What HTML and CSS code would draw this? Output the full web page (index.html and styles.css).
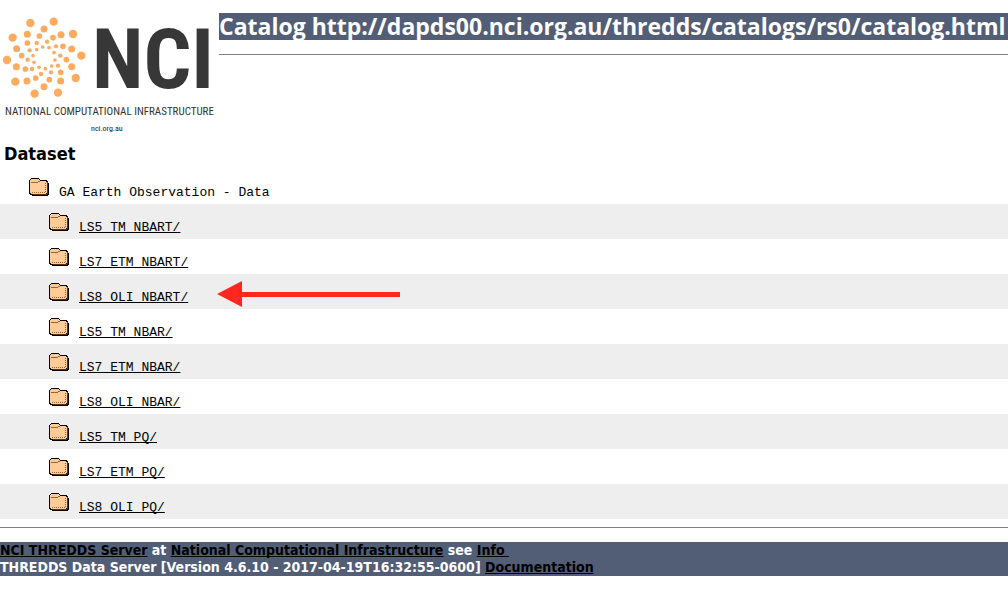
FILE: index.html
```html
<!DOCTYPE html>
<html lang="en">
<head>
<meta charset="utf-8">
<title>Catalog http://dapds00.nci.org.au/thredds/catalogs/rs0/catalog.html</title>
<link rel="stylesheet" href="styles.css">
</head>
<body>
<svg class="defs" aria-hidden="true">
  <symbol id="folder" viewBox="0 0 20 18">
    <path fill="#000" d="M2 0h8v1h1v1h7v1h1v2h1v12h-1v1H3v-1H1v-1H0V2h1V1h1z"/>
    <path fill="#663300" d="M18 4h1v12h-1v1H4v-1h14z"/>
    <path fill="#ffcc99" d="M2 1h8v1h1v1h6v1h1v11h-1v1H2v-1H1V2h1z"/>
    <path fill="none" stroke="#996633" d="M2 4.500h7M9 3.500h2"/>
    <path fill="none" stroke="#996633" stroke-dasharray="1 1" d="M3 14.500h14M16.500 5v10"/>
  </symbol>
</svg>
<header class="masthead">
  <svg class="logo" viewBox="0 0 219 138" role="img" aria-label="NCI National Computational Infrastructure">
    <g class="logo-dots" transform="scale(.33333)">
      <g><circle cx="91" cy="69" r="12.500"/><circle cx="161" cy="65" r="12.500"/><circle cx="219" cy="102" r="12.500"/><circle cx="244" cy="167" r="12.500"/><circle cx="227" cy="234" r="12.500"/><circle cx="174" cy="278" r="12.500"/><circle cx="104" cy="281" r="12.500"/><circle cx="46" cy="245" r="12.500"/><circle cx="21" cy="180" r="12.500"/><circle cx="38" cy="113" r="12.500"/></g>
      <g><circle cx="132" cy="87" r="10.500"/><circle cx="183" cy="104" r="10.500"/><circle cx="215" cy="147" r="10.500"/><circle cx="215" cy="200" r="10.500"/><circle cx="182" cy="243" r="10.500"/><circle cx="132" cy="260" r="10.500"/><circle cx="81" cy="243" r="10.500"/><circle cx="49" cy="200" r="10.500"/><circle cx="50" cy="146" r="10.500"/><circle cx="82" cy="103" r="10.500"/></g>
      <g><circle cx="159" cy="113" r="8.500"/><circle cx="189" cy="139" r="8.500"/><circle cx="199" cy="179" r="8.500"/><circle cx="182" cy="217" r="8.500"/><circle cx="148" cy="239" r="8.500"/><circle cx="107" cy="234" r="8.500"/><circle cx="76" cy="207" r="8.500"/><circle cx="65" cy="167" r="8.500"/><circle cx="82" cy="129" r="8.500"/><circle cx="118" cy="108" r="8.500"/></g>
      <g><circle cx="141" cy="125" r="6.500"/><circle cx="168" cy="139" r="6.500"/><circle cx="181" cy="167" r="6.500"/><circle cx="174" cy="197" r="6.500"/><circle cx="153" cy="217" r="6.500"/><circle cx="123" cy="222" r="6.500"/><circle cx="96" cy="207" r="6.500"/><circle cx="83" cy="179" r="6.500"/><circle cx="89" cy="151" r="6.500"/><circle cx="110" cy="129" r="6.500"/></g>
      <g><circle cx="128" cy="141" r="5.500"/><circle cx="147" cy="143" r="5.500"/><circle cx="162" cy="158" r="5.500"/><circle cx="165" cy="180" r="5.500"/><circle cx="155" cy="198" r="5.500"/><circle cx="136" cy="206" r="5.500"/><circle cx="117" cy="202" r="5.500"/><circle cx="102" cy="187" r="5.500"/><circle cx="99" cy="167" r="5.500"/><circle cx="110" cy="149" r="5.500"/></g>
    </g>
    <text class="logo-name" x="92" y="88">NCI</text>
    <text class="logo-tagline" x="5" y="115">NATIONAL COMPUTATIONAL INFRASTRUCTURE</text>
    <text class="logo-site" x="91" y="131">nci.org.au</text>
  </svg>
  <div class="heading">
    <h1 class="title">Catalog http://dapds00.nci.org.au/thredds/catalogs/rs0/catalog.html</h1>
    <hr class="rule">
  </div>
</header>
<main>
  <table class="catalog">
    <thead><tr><th scope="col">Dataset</th></tr></thead>
    <tbody>
      <tr><td class="root"><div class="entry"><svg class="folder"><use href="#folder"/></svg><span>GA Earth Observation - Data</span></div></td></tr>
      <tr><td><div class="entry"><svg class="folder"><use href="#folder"/></svg><a href="#">LS5_TM_NBART/</a></div></td></tr>
      <tr><td><div class="entry"><svg class="folder"><use href="#folder"/></svg><a href="#">LS7_ETM_NBART/</a></div></td></tr>
      <tr><td><div class="entry"><svg class="folder"><use href="#folder"/></svg><a href="#">LS8_OLI_NBART/</a><svg class="arrow" viewBox="0 0 183 26" aria-hidden="true"><path d="M0 13 25 0v11h158v5H25v10z"/></svg></div></td></tr>
      <tr><td><div class="entry"><svg class="folder"><use href="#folder"/></svg><a href="#">LS5_TM_NBAR/</a></div></td></tr>
      <tr><td><div class="entry"><svg class="folder"><use href="#folder"/></svg><a href="#">LS7_ETM_NBAR/</a></div></td></tr>
      <tr><td><div class="entry"><svg class="folder"><use href="#folder"/></svg><a href="#">LS8_OLI_NBAR/</a></div></td></tr>
      <tr><td><div class="entry"><svg class="folder"><use href="#folder"/></svg><a href="#">LS5_TM_PQ/</a></div></td></tr>
      <tr><td><div class="entry"><svg class="folder"><use href="#folder"/></svg><a href="#">LS7_ETM_PQ/</a></div></td></tr>
      <tr><td><div class="entry"><svg class="folder"><use href="#folder"/></svg><a href="#">LS8_OLI_PQ/</a></div></td></tr>
    </tbody>
  </table>
</main>
<hr class="rule rule-bottom">
<footer class="server">
  <p><a href="#">NCI THREDDS Server</a> at <a href="#">National Computational Infrastructure</a> see <a href="#">Info&nbsp;</a></p>
  <p>THREDDS Data Server [Version 4.6.10 - 2017-04-19T16:32:55-0600] <a href="#">Documentation</a></p>
</footer>
</body>
</html>
```
FILE: styles.css
```css
body {
  margin: 0;
  background: #fff;
  color: #000;
  font-family: Tahoma, "DejaVu Sans Condensed", "DejaVu Sans", sans-serif;
}
a { color: #000; text-decoration-skip-ink: none; }
.defs { display: block; width: 0; height: 0; }
.masthead { display: flex; align-items: flex-start; }
.logo { flex: none; width: 219px; height: 138px; }
.logo-dots { fill: #fdab5f; }
.logo-name {
  fill: #373737;
  font: bold 84px "Roboto Condensed", Roboto, sans-serif;
}
.logo-tagline { fill: #333; font: 11px "Roboto Condensed", Roboto, sans-serif; }
.logo-site { fill: #222; font: 8px "Roboto Condensed", Roboto, sans-serif; }
.heading { flex: 1; min-width: 0; padding-top: 13px; }
.title {
  margin: 0;
  background: #525d76;
  color: #fff;
  font-family: Tahoma, "Open Sans", sans-serif;
  font-size: 23px;
  line-height: 27px;
  white-space: nowrap;
}
.rule { height: 1px; margin: 14px 0 0; border: 0; background: #808080; }
.catalog { width: 100%; border-collapse: collapse; }
.catalog th {
  padding: 5px 4px 4px;
  font-size: 18px;
  line-height: 22px;
  text-align: left;
}
.catalog td { padding: 0 0 0 49px; }
.catalog td.root { padding-left: 29px; }
.catalog tbody tr:nth-child(even) { background: #eee; }
.entry {
  position: relative;
  display: flex;
  gap: 10px;
  height: 35px;
  font: 13px/16px "Liberation Mono", monospace;
}
.entry a, .entry span { margin-top: 16px; }
.folder { width: 20px; height: 18px; margin-top: 9px; }
.arrow {
  position: absolute;
  left: 168px;
  top: 7px;
  width: 183px;
  height: 26px;
  fill: #ff2720;
}
.rule-bottom { margin: 8px 0 14px; }
.server {
  background: #525d76;
  color: #fff;
  font-size: 14px;
  font-weight: bold;
  line-height: 17px;
}
.server p { margin: 0; }
```
